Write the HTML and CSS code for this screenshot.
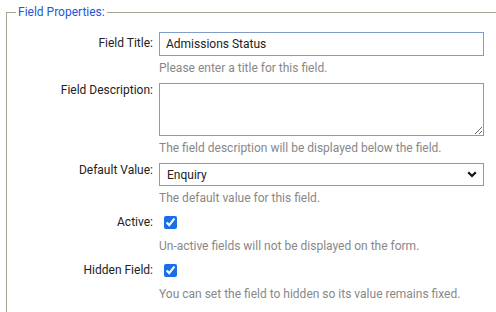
FILE: index.html
```html
<!DOCTYPE html>
<html lang="en">
<head>
  <meta charset="UTF-8" />
  <title>Field Properties</title>
  <link rel="stylesheet" href="styles.css">
</head>
<body>

  <fieldset class="props">
    <legend>Field Properties:</legend>

    <div class="form-grid">
      <label class="field-label label-mid" for="fieldTitle">Field Title:</label>
      <div class="field-cell">
        <input type="text" id="fieldTitle" class="text-input" value="Admissions Status" />
        <div class="hint">Please enter a title for this field.</div>
      </div>

      <label class="field-label" for="fieldDesc">Field Description:</label>
      <div class="field-cell">
        <textarea id="fieldDesc" class="text-area"></textarea>
        <div class="hint">The field description will be displayed below the field.</div>
      </div>

      <label class="field-label" for="defaultValue">Default Value:</label>
      <div class="field-cell">
        <div class="select-wrap">
          <select id="defaultValue" class="select-input">
            <option>Enquiry</option>
            <option>Applied</option>
            <option>Accepted</option>
          </select>
          <svg class="select-arrow" width="10" height="7" viewBox="0 0 10 7">
            <path d="M1.2 1.2 L5 5 L8.8 1.2" fill="none" stroke="#111" stroke-width="2.2" />
          </svg>
        </div>
        <div class="hint">The default value for this field.</div>
      </div>

      <label class="field-label label-check" for="active">Active:</label>
      <div class="field-cell">
        <input type="checkbox" id="active" class="check" checked />
        <div class="hint">Un-active fields will not be displayed on the form.</div>
      </div>

      <label class="field-label label-check" for="hidden">Hidden Field:</label>
      <div class="field-cell">
        <input type="checkbox" id="hidden" class="check" checked />
        <div class="hint">You can set the field to hidden so its value remains fixed.</div>
      </div>
    </div>
  </fieldset>

</body>
</html>
```

FILE: styles.css
```css
html, body {
  margin: 0;
  padding: 0;
  overflow: hidden;
}

body {
  font-family: Roboto, 'Liberation Sans', sans-serif;
  font-size: 12px;
  color: #222;
  background: #ffffff;
  padding-top: 4px;
}

.props {
  margin: 0 -20px 0 6px;
  padding: 12px 9px 30px 9px;
  border: 1px solid #a7a390;
  min-width: 0;
}

.props legend {
  color: #2158d6;
  padding: 0 2px;
  line-height: 16px;
}

.form-grid {
  display: grid;
  grid-template-columns: 137px 325px;
  column-gap: 6px;
  row-gap: 7px;
  align-items: start;
}

.field-label {
  text-align: right;
  line-height: 15px;
}

.label-mid {
  padding-top: 4px;
}

.label-check {
  padding-top: 2px;
}

.field-cell {
  display: flex;
  flex-direction: column;
}

.text-input,
.text-area,
.select-input {
  box-sizing: border-box;
  width: 100%;
  border: 1px solid #7f9dc6;
  border-radius: 0;
  font-family: Roboto, 'Liberation Sans', sans-serif;
  font-size: 12px;
  color: #222;
  background: #fff;
  margin: 0;
  outline: none;
}

.text-input {
  height: 24px;
  padding: 0 6px;
}

.text-area {
  height: 53px;
  padding: 3px 6px;
  display: block;
}

.select-wrap {
  position: relative;
}

.select-input {
  appearance: none;
  -webkit-appearance: none;
  height: 23px;
  padding: 0 20px 0 7px;
  display: block;
}

.select-arrow {
  position: absolute;
  right: 7px;
  top: 8px;
  pointer-events: none;
}

.check {
  display: block;
  width: 13px;
  height: 13px;
  margin: 3px 0 5px 5px;
  accent-color: #1a6fe6;
}

.hint {
  margin-top: 5px;
  line-height: 15px;
  color: #888;
}
```
